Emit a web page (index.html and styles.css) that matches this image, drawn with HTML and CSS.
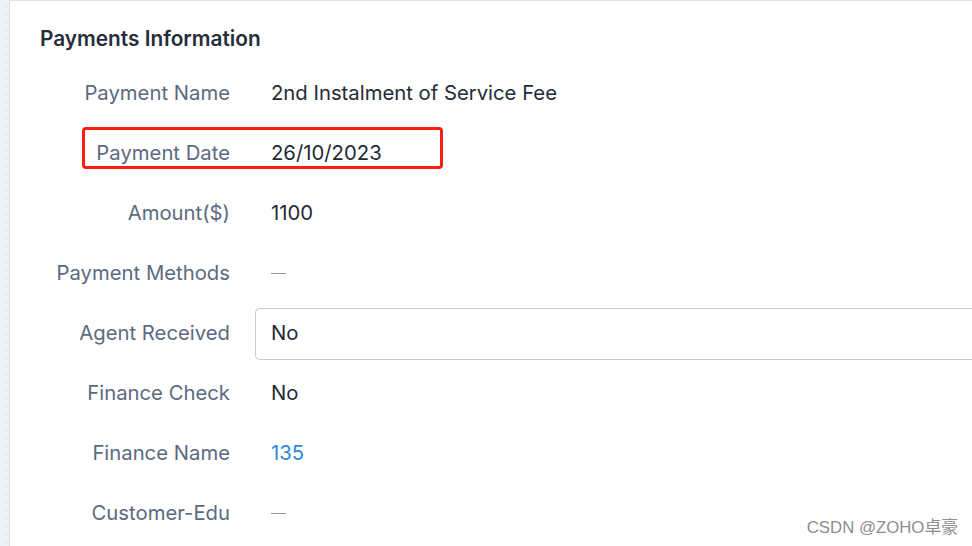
FILE: index.html
```html
<!DOCTYPE html>
<html>
<head>
<meta charset="utf-8">
<link rel="stylesheet" href="styles.css">
</head>
<body>
<div class="page">
  <div class="side"></div>
  <div class="card">
    <h2 class="title">Payments Information</h2>
    <div class="rows">
      <div class="row"><div class="label">Payment Name</div><div class="value">2nd Instalment of Service Fee</div></div>
      <div class="row"><div class="label">Payment Date</div><div class="value">26/10/2023</div><div class="mark"></div></div>
      <div class="row"><div class="label">Amount($)</div><div class="value">1100</div></div>
      <div class="row"><div class="label">Payment Methods</div><div class="value"><span class="dash"></span></div></div>
      <div class="row"><div class="label">Agent Received</div><div class="value input">No</div></div>
      <div class="row"><div class="label">Finance Check</div><div class="value">No</div></div>
      <div class="row"><div class="label">Finance Name</div><div class="value link">135</div></div>
      <div class="row"><div class="label">Customer-Edu</div><div class="value"><span class="dash"></span></div></div>
    </div>
  </div>
  <div class="watermark">CSDN @ZOHO卓豪</div>
</div>
</body>
</html>
```
FILE: styles.css
```css
html, body { margin: 0; padding: 0; }
body { font-family: Inter, "Noto Sans CJK SC", sans-serif; background: #fff; width: 972px; height: 546px; overflow: hidden; }
.page { display: flex; height: 546px; position: relative; }
.side {
  width: 9px; flex: none; background-color: #eef1f5;
  background-image: radial-gradient(circle, #cfd5dc 0.8px, transparent 1px);
  background-size: 9px 8px; background-position: 2px 2px;
}
.card { flex: 1; border-left: 1px solid #dde1e7; border-top: 1px solid #dde1e7; background: #fff; padding: 0 0 0 30px; }
.title { margin: 23px 0 0 0; font-size: 20.8px; font-weight: 600; color: #262d3b; line-height: 30px; }
.rows { margin-top: 8px; display: flex; flex-direction: column; }
.row { display: flex; align-items: center; height: 60px; position: relative; }
.label { width: 190px; flex: none; text-align: right; font-size: 20.3px; color: #5b6a80; }
.value { margin-left: 41px; font-size: 20.3px; color: #232a36; flex: 1; }
.value.link { color: #2d8ad8; }
.value.input { margin-left: 25px; margin-top: 4px; height: 47px; padding-bottom: 3px; border: 1px solid #c6cbd2; border-right: none; border-radius: 5px 0 0 5px; display: flex; align-items: center; padding-left: 15px; }
.dash { display: inline-block; width: 15px; height: 1px; background: #8b9aa5; vertical-align: middle; }
.mark { position: absolute; left: 42px; top: 5px; width: 355px; height: 36px; border: 3px solid #ff1d12; border-radius: 4px; }
.watermark { position: absolute; right: 14px; bottom: 8px; font-family: "Liberation Sans", "Noto Sans CJK SC", sans-serif; font-size: 16.8px; color: #8e8e8e; }
```
